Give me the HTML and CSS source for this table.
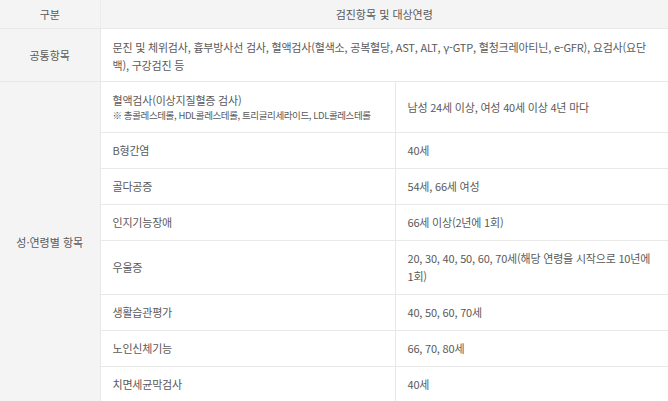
FILE: index.html
```html
<!DOCTYPE html>
<html lang="ko">

<head>
    <meta charset="UTF-8">
    <meta name="viewport" content="width=device-width, initial-scale=1.0">
    <title>검진항목 및 대상연령</title>

    <link rel="stylesheet" href="styles.css">
</head>

<body>

    <table class="checkup">
        <colgroup>
            <col class="col-group">
            <col class="col-item">
            <col class="col-age">
        </colgroup>
        <thead>
            <tr class="row-head">
                <th>구분</th>
                <th colspan="2">검진항목 및 대상연령</th>
            </tr>
        </thead>
        <tbody>
            <tr class="row-common">
                <th>공통항목</th>
                <td colspan="2">문진 및 체위검사, 흉부방사선 검사, 혈액검사(혈색소, 공복혈당, AST, ALT, γ-GTP, 혈청크레아티닌, e-GFR), 요검사(요단백), 구강검진 등</td>
            </tr>
            <tr class="row-blood">
                <th rowspan="8">성·연령별 항목</th>
                <td>혈액검사(이상지질혈증 검사)<span class="note">※ 총콜레스테롤, HDL콜레스테롤, 트리글리세라이드, LDL콜레스테롤</span></td>
                <td>남성 24세 이상, 여성 40세 이상 4년 마다</td>
            </tr>
            <tr class="row-b">
                <td>B형간염</td>
                <td>40세</td>
            </tr>
            <tr class="row-b">
                <td>골다공증</td>
                <td>54세, 66세 여성</td>
            </tr>
            <tr class="row-b">
                <td>인지기능장애</td>
                <td>66세 이상(2년에 1회)</td>
            </tr>
            <tr class="row-tall">
                <td>우울증</td>
                <td>20, 30, 40, 50, 60, 70세(해당 연령을 시작으로 10년에 1회)</td>
            </tr>
            <tr class="row-b">
                <td>생활습관평가</td>
                <td>40, 50, 60, 70세</td>
            </tr>
            <tr class="row-b">
                <td>노인신체기능</td>
                <td>66, 70, 80세</td>
            </tr>
            <tr class="row-b">
                <td>치면세균막검사</td>
                <td>40세</td>
            </tr>
        </tbody>
    </table>

</body>

</html>
```

FILE: styles.css
```css
* {
    box-sizing: border-box;
    padding: 0;
    margin: 0;
}

body {
    background-color: #fff;
    font-family: "Noto Sans CJK KR", "Noto Sans", sans-serif;
    color: #5a5a5a;
}

.checkup {
    width: 668px;
    border-collapse: collapse;
    table-layout: fixed;
    font-size: 11px;
    line-height: 18px;
}

.col-group {
    width: 100px;
}

.col-item {
    width: 295px;
}

.checkup th {
    background: #f4f4f4;
    font-weight: 400;
    color: #5a5a5a;
    text-align: center;
    border-bottom: 1px solid #e8e8e8;
}

.checkup td {
    padding: 0 18px 0 12px;
    border-bottom: 1px solid #e8e8e8;
    border-left: 1px solid #e8e8e8;
    vertical-align: middle;
    letter-spacing: -0.2px;
}

.checkup td + td {
    padding-right: 4px;
    word-break: keep-all;
}

.row-head th {
    height: 28px;
    border-left: 1px solid #ececec;
}

.row-head th:first-child {
    border-left: none;
}

.row-common {
    height: 53px;
}

.row-common td {
    padding-top: 2px;
}

.row-blood {
    height: 51px;
}

.note {
    display: block;
    font-size: 9.5px;
    line-height: 13px;
    letter-spacing: -0.4px;
}

.row-b {
    height: 36px;
}

.row-tall {
    height: 54px;
}
```
